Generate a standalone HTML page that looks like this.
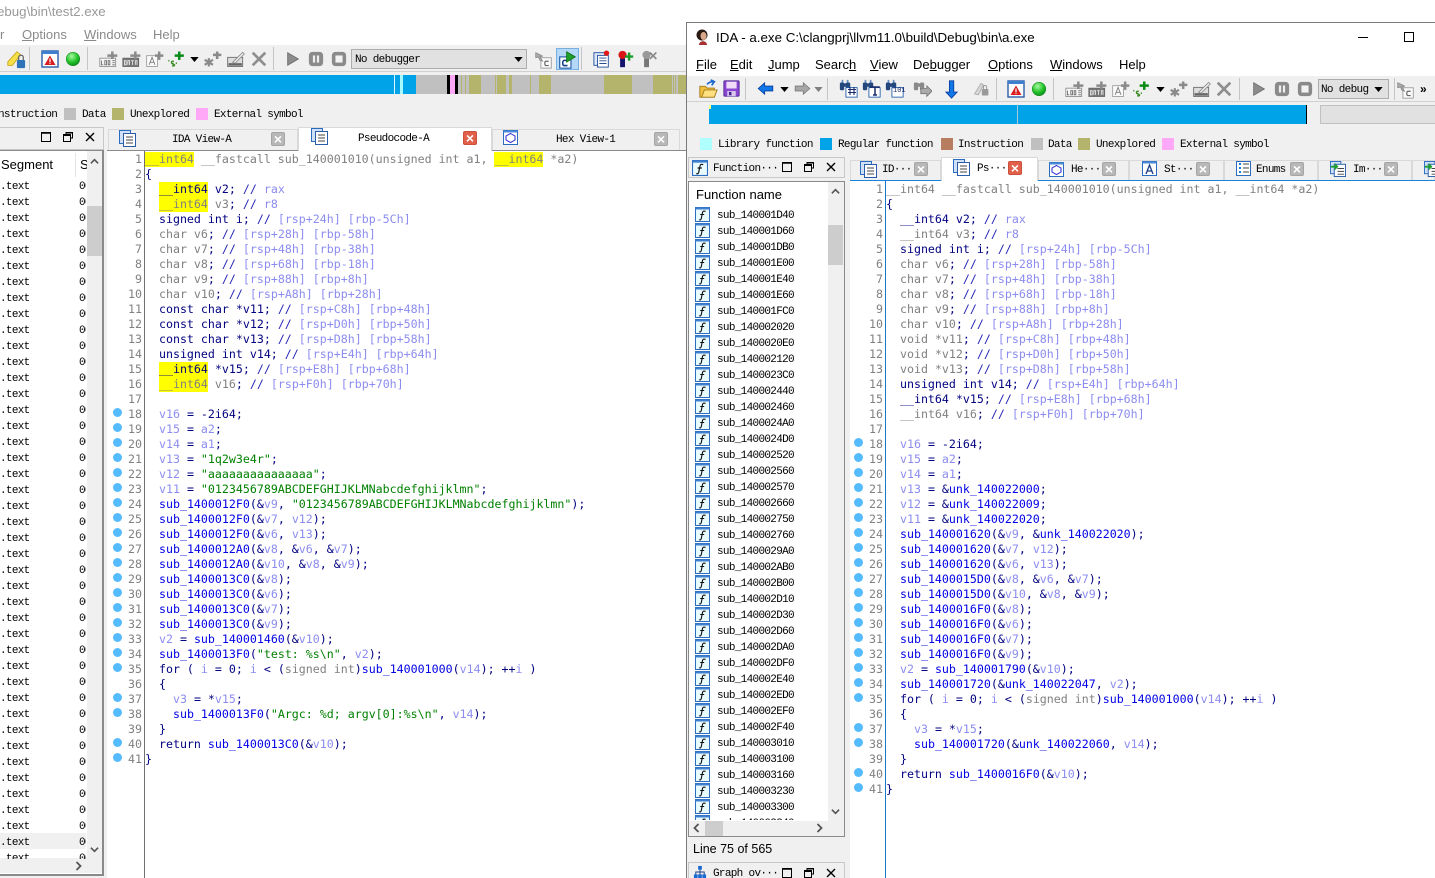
<!DOCTYPE html>
<html><head><meta charset="utf-8"><title>IDA</title>
<style>
html,body{margin:0;padding:0;background:#fff}
#p{position:relative;width:1435px;height:878px;overflow:hidden;background:#fff;font-family:"Liberation Sans",sans-serif}
#p div,#p pre,#p svg{position:absolute;margin:0}
.t{white-space:pre;font-size:12.6px;line-height:16px;color:#000}
.m{font-family:"Liberation Mono",monospace;font-size:11px;letter-spacing:-.68px;line-height:14px;white-space:pre;color:#000}
#p .m{margin-top:1px}
pre.c{font-family:"DejaVu Sans Mono",monospace;font-size:11.62px;line-height:15px;color:#000080}
pre.n{font-family:"DejaVu Sans Mono",monospace;font-size:11.62px;line-height:15px;color:#808080;text-align:right;width:30px}
pre.l{font-family:"Liberation Mono",monospace;font-size:11px;letter-spacing:-.68px;line-height:16px;color:#000;overflow:hidden}
#p pre.l{margin-top:1px}
pre a{color:#808080}
pre b{color:#8c8cf0;font-weight:normal}
pre i{color:#2626b8;font-style:normal}
pre em{color:#0000e6;font-style:normal}
pre s{color:#008000;text-decoration:none}
pre u{background:#ff0;text-decoration:none;display:inline-block;height:15px}
.u{text-decoration:underline}
.bx{width:12px;height:12px}
.tab{background:#f0f0f0;border:1px solid #d9d9d9;border-bottom:0;box-sizing:border-box}
.act{background:#fff;border:1px solid #d9d9d9;border-bottom:0;box-sizing:border-box}
.sep{width:1px;background:#c4c4c4}
.cl{width:14px;height:14px;border-radius:2px;background:#b8b8b8;border:1px solid #a5a5a5;box-sizing:border-box;color:#fff;font:bold 14px/12px "Liberation Sans",sans-serif;text-align:center}
.cl.r{background:#e2604a;border-color:#c9503c}
.d{width:9px;height:9px;border-radius:50%;background:#55bbff}
.s{height:19px;background:#b4b46c;top:75px}
</style></head><body><div id="p">
<svg width="0" height="0" style="left:0;top:0">
<defs>
<symbol id="redA" viewBox="0 0 18 18"><rect x="1" y="1" width="16" height="16" fill="#fff" stroke="#2a5ca8" stroke-width="1.4"/><rect x="1" y="1" width="16" height="3" fill="#3f7fd0"/><path d="M9 5.5L14.5 15H3.5Z" fill="#d81e1e"/><rect x="8.4" y="8.5" width="1.2" height="3.5" fill="#fff"/><rect x="8.4" y="12.6" width="1.2" height="1.2" fill="#fff"/></symbol>
<symbol id="green" viewBox="0 0 20 20"><defs><radialGradient id="gg" cx=".4" cy=".3" r=".8"><stop offset="0" stop-color="#a8f8a0"/><stop offset=".55" stop-color="#22c42a"/><stop offset="1" stop-color="#0d7a18"/></radialGradient></defs><circle cx="10" cy="10" r="7.5" fill="url(#gg)" stroke="#148a1c" stroke-width=".6"/></symbol>
<symbol id="code" viewBox="0 0 24 20"><rect x="1" y="9" width="19" height="10" fill="#f4f4f4" stroke="#8a8a8a"/><path d="M10 6h12M16 1v9" stroke="#8a8a8a" stroke-width="3"/><path d="M3 12v5h2M7 12h2v5H7zM11 12v5h2v-5zM16 12h3M16 14.500h3M16 17h3" stroke="#666" fill="none" stroke-width="1"/></symbol>
<symbol id="data" viewBox="0 0 24 20"><rect x="1" y="9" width="19" height="10" fill="#777" stroke="#666"/><path d="M10 6h12M16 1v9" stroke="#8a8a8a" stroke-width="3"/><path d="M3 12v5h2v-5zM7 17v-5h2v5M11 12h3M12.500 12v5M16 17v-5h2v5" stroke="#eee" fill="none"/></symbol>
<symbol id="aa" viewBox="0 0 24 20"><rect x="2" y="6" width="13" height="13" fill="#fafafa" stroke="#999"/><path d="M5 17l3.500-9 3.500 9M6.500 14h4" stroke="#777" fill="none"/><path d="M12 6h10M17 1v10" stroke="#8a8a8a" stroke-width="3"/></symbol>
<symbol id="ss" viewBox="0 0 24 20"><path d="M8 6h11M13.500 1v10" stroke="#0a8a16" stroke-width="3"/><path d="M7 13c-3-1-4 2-1 3s2 3-1 2" stroke="#3a8a22" stroke-width="1.800" fill="none"/><path d="M1 11v2M10 14v2" stroke="#3a8a22" stroke-width="1.300"/></symbol>
<symbol id="star" viewBox="0 0 24 20"><path d="M7 9v10M2 11l10 6M12 11L2 17" stroke="#8a8a8a" stroke-width="2.600"/><path d="M12 5h10M17 1v9" stroke="#8a8a8a" stroke-width="3"/></symbol>
<symbol id="edit" viewBox="0 0 24 20"><rect x="2" y="8" width="18" height="11" fill="#ddd" stroke="#666"/><rect x="3" y="15" width="16" height="3" fill="#666"/><path d="M8 14L20 2l2 2L11 15z" fill="#eee" stroke="#888"/></symbol>
<symbol id="xx" viewBox="0 0 20 20"><path d="M3 3l14 14M17 3L3 17" stroke="#8e8e8e" stroke-width="3"/></symbol>
<symbol id="play" viewBox="0 0 18 18"><path d="M3 2L15 9 3 16Z" fill="#8c8c8c" stroke="#6e6e6e"/></symbol>
<symbol id="pause" viewBox="0 0 18 18"><rect x="1" y="1" width="16" height="16" rx="4" fill="#8a8a8a"/><rect x="5.500" y="5" width="2.500" height="8" fill="#eee"/><rect x="10" y="5" width="2.500" height="8" fill="#eee"/></symbol>
<symbol id="stop" viewBox="0 0 18 18"><rect x="1" y="1" width="16" height="16" rx="4" fill="#8a8a8a"/><rect x="5" y="5" width="8" height="8" fill="#f2f2f2"/></symbol>
<symbol id="cc" viewBox="0 0 22 22"><rect x="8" y="9" width="12" height="12" fill="#fafafa" stroke="#999"/><path d="M17 13h-3c-2 0-2 5 0 5h3" stroke="#666" fill="none" stroke-width="1.400"/><path d="M2 3l8 4-3 1 3 5-3-1-2-4-3 1z" fill="#aaa" stroke="#777" stroke-width=".7"/></symbol>
<symbol id="cg" viewBox="0 0 22 22"><rect x="2" y="8" width="13" height="13" fill="#fff" stroke="#1f5aa8" stroke-width="1.300"/><path d="M11 12H7c-2 0-2 6 0 6h4" stroke="#123c88" fill="none" stroke-width="1.800"/><path d="M10 2l10 6-10 6z" fill="#1ea02a" stroke="#0f7018"/></symbol>
<symbol id="docp" viewBox="0 0 20 20"><rect x="1" y="3" width="12" height="14" fill="#dfe8f8" stroke="#1f4e9c"/><rect x="5" y="6" width="12" height="13" fill="#fff" stroke="#1f4e9c"/><path d="M7 9h8M7 12h8M7 15h8" stroke="#274a8a"/><circle cx="15" cy="3.500" r="3" fill="#e01818"/></symbol>
<symbol id="bp" viewBox="0 0 22 22"><rect x="5" y="10" width="6" height="11" fill="#14146e"/><circle cx="8" cy="6" r="5" fill="#d81616"/><path d="M11 8h10M16 3v10" stroke="#1c9a28" stroke-width="3"/></symbol>
<symbol id="bg" viewBox="0 0 22 22"><rect x="5" y="10" width="6" height="11" fill="#777"/><circle cx="8" cy="6" r="5" fill="#999"/><path d="M12 3l8 8M20 3l-8 8" stroke="#888" stroke-width="2"/></symbol>
<symbol id="lock" viewBox="0 0 22 22"><path d="M2 13L12 2l4 3L7 17H2z" fill="#f5e04a" stroke="#c8a818"/><rect x="12" y="11" width="9" height="9" rx="1" fill="#2e72b8"/><path d="M14 11V8c0-3 5-3 5 0v3" stroke="#666" fill="none" stroke-width="1.400"/></symbol>
<symbol id="lockg" viewBox="0 0 22 22"><path d="M3 17L11 4l3 2-6 12z" fill="#d6d6d6" stroke="#aaa"/><rect x="12" y="11" width="8" height="8" rx="1" fill="#9a9a9a"/><path d="M14 11V9c0-3 4-3 4 0v2" stroke="#888" fill="none"/></symbol>
<symbol id="open" viewBox="0 0 22 22"><path d="M2 8h6l2 2h8v10H2z" fill="#f0c040" stroke="#a07818"/><path d="M4 20l3-8h14l-3 8z" fill="#ffe080" stroke="#a07818"/><path d="M10 6c2-3 5-3 7-3M14 1l4 2-3 4" stroke="#1a66cc" fill="none" stroke-width="1.800"/></symbol>
<symbol id="save" viewBox="0 0 20 20"><rect x="1" y="1" width="18" height="18" rx="1" fill="#8a46d0" stroke="#4a1f90"/><rect x="4" y="2" width="12" height="8" fill="#f0dcf8"/><rect x="5" y="13" width="10" height="6" fill="#d8c8ee"/><rect x="7" y="14" width="3" height="4" fill="#4a1f90"/></symbol>
<symbol id="la" viewBox="0 0 20 16"><path d="M1 8l8-7v4h10v6H9v4z" fill="#1278e8" stroke="#0a3c9c"/></symbol>
<symbol id="ra" viewBox="0 0 20 16"><path d="M19 8l-8-7v4H1v6h10v4z" fill="#a8a8a8" stroke="#777"/></symbol>
<symbol id="dn" viewBox="0 0 10 6"><path d="M0 0h10L5 6z" fill="#000"/></symbol>
<symbol id="dng" viewBox="0 0 10 6"><path d="M0 0h10L5 6z" fill="#808080"/></symbol>
<symbol id="bino" viewBox="0 0 22 22"><rect x="1" y="4" width="5" height="9" rx="1.500" fill="#24487e"/><rect x="8" y="4" width="5" height="9" rx="1.500" fill="#24487e"/><rect x="5" y="5" width="4" height="4" fill="#24487e"/><rect x="3" y="1" width="2" height="3" fill="#6a8ec0"/><rect x="9" y="1" width="2" height="3" fill="#6a8ec0"/><rect x="8" y="10" width="13" height="11" fill="#fff" stroke="#1f5aa8"/></symbol>
<symbol id="binog" viewBox="0 0 22 22"><rect x="1" y="4" width="5" height="9" rx="1.500" fill="#8a8a8a"/><rect x="8" y="4" width="5" height="9" rx="1.500" fill="#8a8a8a"/><rect x="5" y="5" width="4" height="4" fill="#8a8a8a"/><path d="M9 11h7V8l6 6-6 6v-3H9z" fill="#aaa" stroke="#777"/></symbol>
<symbol id="down" viewBox="0 0 16 22"><path d="M5 1h5v13h4l-6.500 7L1 14h4z" fill="#1278e8" stroke="#0a3c9c"/></symbol>
<symbol id="doc" viewBox="0 0 17 17"><rect x=".5" y=".5" width="11" height="13" fill="#cfe0f8" stroke="#2a6cc0"/><rect x="4.500" y="3.500" width="12" height="13" fill="#fff" stroke="#2a5ca8"/><path d="M7 7h7M7 10h7M7 13h7" stroke="#444"/></symbol>
<symbol id="hex" viewBox="0 0 15 15"><rect x=".5" y=".5" width="14" height="14" fill="#fff" stroke="#2a6cc0"/><rect x=".5" y=".5" width="14" height="2" fill="#4a8ad8"/><path d="M7.500 3.500l4.500 2.500v4l-4.500 2.500L3 10V6z" fill="#fff" stroke="#2222d0"/></symbol>
<symbol id="st" viewBox="0 0 15 15"><rect x=".5" y=".5" width="14" height="14" fill="#fff" stroke="#2a6cc0"/><rect x=".5" y=".5" width="14" height="2" fill="#4a8ad8"/><path d="M4 13L7.500 4 11 13M5.500 10h4" stroke="#1a3c88" fill="none" stroke-width="1.300"/></symbol>
<symbol id="en" viewBox="0 0 15 15"><rect x=".5" y=".5" width="14" height="14" fill="#fff" stroke="#2a6cc0"/><path d="M3 3h2M3 7h2M3 11h2" stroke="#1a7ae0" stroke-width="2"/><path d="M7 3h6M7 7h6M7 11h6" stroke="#444"/></symbol>
<symbol id="im" viewBox="0 0 17 17"><rect x=".5" y=".5" width="11" height="13" fill="#cfe0f8" stroke="#2a6cc0"/><rect x="4.500" y="3.500" width="12" height="13" fill="#fff" stroke="#2a5ca8"/><path d="M8 8h7M8 11h7M8 14h7" stroke="#444"/><path d="M1 5h4V2l4 4-4 4V7H1z" fill="#20a030"/></symbol>
<symbol id="fn" viewBox="0 0 15 15"><rect x=".5" y=".5" width="14" height="14" fill="#e8fbff" stroke="#2a6cc0"/><rect x=".5" y=".5" width="14" height="2" fill="#3f7fd0"/><path d="M10.500 4.500c-2-1.200-3 0-3.200 2l-1 5c-.3 1.500-1.300 1.800-2.300 1.200M5.200 7.500h4" stroke="#111" fill="none" stroke-width="1.100"/></symbol>
<symbol id="gr" viewBox="0 0 15 15"><rect x="5.500" y="1" width="4" height="4" fill="#1a6ad0"/><rect x="1" y="10" width="4" height="4" fill="#1a6ad0"/><rect x="5.500" y="10" width="4" height="4" fill="#1a6ad0"/><rect x="10" y="10" width="4" height="4" fill="#1a6ad0"/><path d="M7.500 5v5M3 10V7.500h9V10" stroke="#1a3c88" fill="none"/></symbol>
<symbol id="mx" viewBox="0 0 12 12"><rect x="1.500" y="1.500" width="9" height="9" fill="none" stroke="#000"/><path d="M1 2h10" stroke="#000" stroke-width="1.500"/></symbol>
<symbol id="rs" viewBox="0 0 12 12"><path d="M4 3V1.500h6.500V7H8.500" fill="none" stroke="#000"/><rect x="1.500" y="3.500" width="7" height="7" fill="none" stroke="#000"/><path d="M1.500 4.500h7M4 2h6.500" stroke="#000"/></symbol>
<symbol id="cx" viewBox="0 0 12 12"><path d="M2 2l8 8M10 2l-8 8" stroke="#000" stroke-width="1.400"/></symbol>
<symbol id="up" viewBox="0 0 10 7"><path d="M1 5.500L5 1.500l4 4" stroke="#555" fill="none" stroke-width="1.800"/></symbol>
<symbol id="dw" viewBox="0 0 10 7"><path d="M1 1.500l4 4 4-4" stroke="#555" fill="none" stroke-width="1.800"/></symbol>
<symbol id="lt" viewBox="0 0 7 10"><path d="M5.500 1L1.500 5l4 4" stroke="#555" fill="none" stroke-width="1.800"/></symbol>
<symbol id="rt" viewBox="0 0 7 10"><path d="M1.500 1l4 4-4 4" stroke="#555" fill="none" stroke-width="1.800"/></symbol>
<pattern id="fnp" x="0" y="0" width="16" height="16" patternUnits="userSpaceOnUse"><use href="#fn" width="15" height="15"/></pattern>
</defs></svg>

<!-- LEFT WINDOW -->
<div class="t" style="left:-3px;top:4px;color:#999;font-size:13.3px">ebug\bin\test2.exe</div>
<div class="t" style="left:0;top:27px;color:#8a8a8a;font-size:13px">r</div>
<div class="t" style="left:22px;top:27px;color:#8a8a8a;font-size:13px"><span class="u">O</span>ptions</div>
<div class="t" style="left:84px;top:27px;color:#8a8a8a;font-size:13px"><span class="u">W</span>indows</div>
<div class="t" style="left:153px;top:27px;color:#8a8a8a;font-size:13px">Help</div>
<div style="left:0;top:45px;width:687px;height:105px;background:#f0f0f0"></div>
<div style="left:0;top:71px;width:687px;height:1px;background:#d0d0d0"></div>
<div class="sep" style="left:29px;top:47px;height:23px"></div><div class="sep" style="left:87px;top:47px;height:23px"></div><div class="sep" style="left:273px;top:47px;height:23px"></div><div class="sep" style="left:581px;top:47px;height:23px"></div>
<svg style="left:6px;top:50px" width="20" height="20"><use href="#lock"/></svg>
<svg style="left:41px;top:50px" width="18" height="18"><use href="#redA"/></svg>
<svg style="left:64px;top:50px" width="18" height="18"><use href="#green"/></svg>
<svg style="left:99px;top:50px" width="20" height="18"><use href="#code"/></svg>
<svg style="left:122px;top:50px" width="20" height="18"><use href="#data"/></svg>
<svg style="left:145px;top:50px" width="20" height="18"><use href="#aa"/></svg>
<svg style="left:168px;top:50px" width="20" height="18"><use href="#ss"/></svg>
<svg style="left:190px;top:57px" width="9" height="5"><use href="#dn"/></svg>
<svg style="left:203px;top:50px" width="20" height="18"><use href="#star"/></svg>
<svg style="left:226px;top:50px" width="20" height="18"><use href="#edit"/></svg>
<svg style="left:250px;top:50px" width="18" height="18"><use href="#xx"/></svg>
<svg style="left:285px;top:51px" width="16" height="16"><use href="#play"/></svg>
<svg style="left:308px;top:51px" width="16" height="16"><use href="#pause"/></svg>
<svg style="left:331px;top:51px" width="16" height="16"><use href="#stop"/></svg>
<div style="left:351px;top:49px;width:176px;height:20px;background:#e1e1e1;border:1px solid #adadad;box-sizing:border-box"></div>
<div class="m" style="left:355px;top:52px">No debugger</div>
<svg style="left:514px;top:57px" width="9" height="5"><use href="#dn"/></svg>
<svg style="left:534px;top:50px" width="19" height="19"><use href="#cc"/></svg>
<div style="left:556px;top:48px;width:23px;height:22px;background:#b4d8f8;border:1px solid #78aee0;box-sizing:border-box"></div>
<svg style="left:558px;top:50px" width="19" height="19"><use href="#cg"/></svg>
<svg style="left:593px;top:50px" width="18" height="18"><use href="#docp"/></svg>
<svg style="left:616px;top:50px" width="18" height="18"><use href="#bp"/></svg>
<svg style="left:640px;top:50px" width="18" height="18"><use href="#bg"/></svg>

<div style="left:0;top:75px;width:687px;height:19px;background:#c0c0c0"></div>
<div class="s" style="left:0;width:416px;background:#00a2e8"></div>
<div class="s" style="left:394px;width:1px;background:#d8f4ff"></div>
<div class="s" style="left:400px;width:3px;background:#a8f8ff"></div>
<div class="s" style="left:447px;width:3px;background:#000"></div>
<div class="s" style="left:450px;width:5px;background:#ffa8f8"></div>
<div class="s" style="left:455px;width:3px;background:#000"></div>
<div class="s" style="left:461px;width:1px"></div><div class="s" style="left:465px;width:1px"></div>
<div class="s" style="left:469px;width:12px"></div>
<div class="s" style="left:495px;width:1px"></div><div class="s" style="left:497px;width:9px"></div>
<div class="s" style="left:509px;width:3px"></div><div class="s" style="left:530px;width:1px"></div>
<div class="s" style="left:539px;width:12px"></div><div class="s" style="left:604px;width:28px"></div>
<div class="s" style="left:653px;width:19px"></div><div class="s" style="left:673px;width:1px"></div>
<div class="s" style="left:675px;width:1px"></div><div class="s" style="left:678px;width:9px"></div>

<div class="m" style="left:-2px;top:107px">nstruction</div>
<div class="bx" style="left:64px;top:108px;background:#c0c0c0"></div><div class="m" style="left:82px;top:107px">Data</div>
<div class="bx" style="left:112px;top:108px;background:#b4b46c"></div><div class="m" style="left:130px;top:107px">Unexplored</div>
<div class="bx" style="left:196px;top:108px;background:#ffa8f8"></div><div class="m" style="left:214px;top:107px">External symbol</div>

<!-- left dock header -->
<div style="left:0;top:127px;width:104px;height:23px;border:1px solid #c8c8c8;border-left:0;box-sizing:border-box"></div>
<svg style="left:40px;top:131px" width="12" height="12"><use href="#mx"/></svg>
<svg style="left:62px;top:131px" width="12" height="12"><use href="#rs"/></svg>
<svg style="left:84px;top:131px" width="12" height="12"><use href="#cx"/></svg>

<!-- left tabs -->
<div class="tab" style="left:108px;top:129px;width:190px;height:21px"></div>
<div class="act" style="left:298px;top:127px;width:194px;height:24px;z-index:2"></div>
<div class="tab" style="left:492px;top:129px;width:188px;height:21px"></div>
<div style="left:105px;top:150px;width:582px;height:1px;background:#8a8a8a"></div>
<svg style="left:119px;top:130px;z-index:3" width="17" height="17"><use href="#doc"/></svg>
<svg style="left:311px;top:128px;z-index:3" width="17" height="17"><use href="#doc"/></svg>
<svg style="left:503px;top:130px;z-index:3" width="15" height="15"><use href="#hex"/></svg>
<div class="m" style="left:172px;top:132px">IDA View-A</div>
<div class="m" style="left:358px;top:131px;z-index:3">Pseudocode-A</div>
<div class="m" style="left:556px;top:132px">Hex View-1</div>
<div class="cl" style="left:271px;top:132px">×</div>
<div class="cl r" style="left:463px;top:131px;z-index:3">×</div>
<div class="cl" style="left:654px;top:132px">×</div>

<!-- segment panel -->
<div style="left:0;top:150px;width:104px;height:726px;background:#fff;border:2px solid #8a8a8a;border-left:0;border-top:1px solid #8a8a8a;box-sizing:border-box"></div>
<div style="left:104px;top:150px;width:3px;height:728px;background:#f0f0f0"></div>
<div style="left:0;top:876px;width:107px;height:2px;background:#f0f0f0"></div>
<div style="left:87px;top:151px;width:15px;height:707px;background:#f0f0f0"></div>
<div style="left:0;top:858px;width:102px;height:15px;background:#f0f0f0"></div>
<div style="left:87px;top:206px;width:15px;height:50px;background:#cdcdcd"></div>
<div style="left:75px;top:153px;width:1px;height:24px;background:#e5e5e5"></div>
<svg style="left:90px;top:158px" width="9" height="7"><use href="#up"/></svg>
<svg style="left:90px;top:846px" width="9" height="7"><use href="#dw"/></svg>
<svg style="left:75px;top:861px" width="7" height="10"><use href="#rt"/></svg>
<div class="t" style="left:1px;top:157px;font-size:13px">Segment</div>
<div class="t" style="left:80px;top:157px;font-size:13px;width:7px;overflow:hidden">S</div>
<div style="left:0;top:833px;width:86px;height:16px;background:#f0f0f0"></div>
<pre class="l" style="left:0;top:178px;width:40px;height:680px">.text
.text
.text
.text
.text
.text
.text
.text
.text
.text
.text
.text
.text
.text
.text
.text
.text
.text
.text
.text
.text
.text
.text
.text
.text
.text
.text
.text
.text
.text
.text
.text
.text
.text
.text
.text
.text
.text
.text
.text
.text
.text
.text</pre>
<pre class="l" style="left:79px;top:178px;width:7px;height:680px">00
00
00
00
00
00
00
00
00
00
00
00
00
00
00
00
00
00
00
00
00
00
00
00
00
00
00
00
00
00
00
00
00
00
00
00
00
00
00
00
00
00
00</pre>

<!-- left code -->
<div style="left:144px;top:151px;width:1px;height:727px;background:#707070"></div>
<pre class="n" style="left:112px;top:152px">1
2
3
4
5
6
7
8
9
10
11
12
13
14
15
16
17
18
19
20
21
22
23
24
25
26
27
28
29
30
31
32
33
34
35
36
37
38
39
40
41</pre>
<pre class="c" style="left:145px;top:152px"><a><u>__int64</u> __fastcall sub_140001010(unsigned int a1, <u>__int64</u> *a2)</a>
{
  <u>__int64</u> v2; <i>//</i> <b>rax</b>
  <u><a>__int64</a></u> <a>v3</a>; <i>//</i> <b>r8</b>
  signed int i; <i>//</i> <b>[rsp+24h] [rbp-5Ch]</b>
  <a>char v6</a>; <i>//</i> <b>[rsp+28h] [rbp-58h]</b>
  <a>char v7</a>; <i>//</i> <b>[rsp+48h] [rbp-38h]</b>
  <a>char v8</a>; <i>//</i> <b>[rsp+68h] [rbp-18h]</b>
  <a>char v9</a>; <i>//</i> <b>[rsp+88h] [rbp+8h]</b>
  <a>char v10</a>; <i>//</i> <b>[rsp+A8h] [rbp+28h]</b>
  const char *v11; <i>//</i> <b>[rsp+C8h] [rbp+48h]</b>
  const char *v12; <i>//</i> <b>[rsp+D0h] [rbp+50h]</b>
  const char *v13; <i>//</i> <b>[rsp+D8h] [rbp+58h]</b>
  unsigned int v14; <i>//</i> <b>[rsp+E4h] [rbp+64h]</b>
  <u>__int64</u> *v15; <i>//</i> <b>[rsp+E8h] [rbp+68h]</b>
  <u><a>__int64</a></u> <a>v16</a>; <i>//</i> <b>[rsp+F0h] [rbp+70h]</b>

  <b>v16</b> = -2i64;
  <b>v15</b> = <b>a2</b>;
  <b>v14</b> = <b>a1</b>;
  <b>v13</b> = <s>"1q2w3e4r"</s>;
  <b>v12</b> = <s>"aaaaaaaaaaaaaaa"</s>;
  <b>v11</b> = <s>"0123456789ABCDEFGHIJKLMNabcdefghijklmn"</s>;
  <em>sub_1400012F0</em>(&amp;<b>v9</b>, <s>"0123456789ABCDEFGHIJKLMNabcdefghijklmn"</s>);
  <em>sub_1400012F0</em>(&amp;<b>v7</b>, <b>v12</b>);
  <em>sub_1400012F0</em>(&amp;<b>v6</b>, <b>v13</b>);
  <em>sub_1400012A0</em>(&amp;<b>v8</b>, &amp;<b>v6</b>, &amp;<b>v7</b>);
  <em>sub_1400012A0</em>(&amp;<b>v10</b>, &amp;<b>v8</b>, &amp;<b>v9</b>);
  <em>sub_1400013C0</em>(&amp;<b>v8</b>);
  <em>sub_1400013C0</em>(&amp;<b>v6</b>);
  <em>sub_1400013C0</em>(&amp;<b>v7</b>);
  <em>sub_1400013C0</em>(&amp;<b>v9</b>);
  <b>v2</b> = <em>sub_140001460</em>(&amp;<b>v10</b>);
  <em>sub_1400013F0</em>(<s>"test: %s\n"</s>, <b>v2</b>);
  for ( <b>i</b> = 0; <b>i</b> &lt; (<a>signed int</a>)<em>sub_140001000</em>(<b>v14</b>); ++<b>i</b> )
  {
    <b>v3</b> = *<b>v15</b>;
    <em>sub_1400013F0</em>(<s>"Argc: %d; argv[0]:%s\n"</s>, <b>v14</b>);
  }
  return <em>sub_1400013C0</em>(&amp;<b>v10</b>);
}</pre>
<div class="d" style="left:113px;top:408px"></div><div class="d" style="left:113px;top:423px"></div><div class="d" style="left:113px;top:438px"></div><div class="d" style="left:113px;top:453px"></div><div class="d" style="left:113px;top:468px"></div><div class="d" style="left:113px;top:483px"></div><div class="d" style="left:113px;top:498px"></div><div class="d" style="left:113px;top:513px"></div><div class="d" style="left:113px;top:528px"></div><div class="d" style="left:113px;top:543px"></div><div class="d" style="left:113px;top:558px"></div><div class="d" style="left:113px;top:573px"></div><div class="d" style="left:113px;top:588px"></div><div class="d" style="left:113px;top:603px"></div><div class="d" style="left:113px;top:618px"></div><div class="d" style="left:113px;top:633px"></div><div class="d" style="left:113px;top:648px"></div><div class="d" style="left:113px;top:663px"></div><div class="d" style="left:113px;top:693px"></div><div class="d" style="left:113px;top:708px"></div><div class="d" style="left:113px;top:738px"></div><div class="d" style="left:113px;top:753px"></div>

<!-- RIGHT WINDOW -->
<div style="left:686px;top:22px;width:749px;height:856px;background:#f0f0f0;border-left:1px solid #7a7a7a;border-top:1px solid #7a7a7a;box-sizing:border-box"></div>
<div style="left:687px;top:23px;width:748px;height:53px;background:#fff"></div>
<svg style="left:695px;top:29px" width="16" height="17" viewBox="0 0 16 17"><ellipse cx="7" cy="6" rx="5.500" ry="5.500" fill="#2a1a14"/><ellipse cx="8.500" cy="7" rx="3" ry="4" fill="#d8a888"/><path d="M4 16c0-5 8-5 8 0z" fill="#a83030"/></svg>
<div class="t" style="left:716px;top:30px;font-size:13.35px">IDA - a.exe C:\clangprj\llvm11.0\build\Debug\bin\a.exe</div>
<div style="left:1358px;top:37px;width:10px;height:1px;background:#000"></div>
<div style="left:1404px;top:32px;width:10px;height:10px;border:1px solid #000;box-sizing:border-box"></div>
<div class="t" style="left:696px;top:57px;font-size:13px"><span class="u">F</span>ile</div>
<div class="t" style="left:730px;top:57px;font-size:13px"><span class="u">E</span>dit</div>
<div class="t" style="left:768px;top:57px;font-size:13px"><span class="u">J</span>ump</div>
<div class="t" style="left:815px;top:57px;font-size:13px">Searc<span class="u">h</span></div>
<div class="t" style="left:870px;top:57px;font-size:13px"><span class="u">V</span>iew</div>
<div class="t" style="left:913px;top:57px;font-size:13px">De<span class="u">b</span>ugger</div>
<div class="t" style="left:988px;top:57px;font-size:13px"><span class="u">O</span>ptions</div>
<div class="t" style="left:1050px;top:57px;font-size:13px"><span class="u">W</span>indows</div>
<div class="t" style="left:1119px;top:57px;font-size:13px">Help</div>
<div style="left:687px;top:101px;width:748px;height:1px;background:#d0d0d0"></div>
<div class="sep" style="left:745px;top:78px;height:22px"></div><div class="sep" style="left:827px;top:78px;height:22px"></div><div class="sep" style="left:996px;top:78px;height:22px"></div><div class="sep" style="left:1053px;top:78px;height:22px"></div><div class="sep" style="left:1239px;top:78px;height:22px"></div><div class="sep" style="left:1394px;top:78px;height:22px"></div>
<svg style="left:698px;top:79px" width="20" height="20"><use href="#open"/></svg>
<svg style="left:723px;top:80px" width="17" height="17"><use href="#save"/></svg>
<svg style="left:757px;top:82px" width="17" height="13"><use href="#la"/></svg>
<svg style="left:780px;top:87px" width="9" height="5"><use href="#dn"/></svg>
<svg style="left:794px;top:82px" width="17" height="13"><use href="#ra"/></svg>
<svg style="left:814px;top:87px" width="9" height="5"><use href="#dng"/></svg>
<svg style="left:839px;top:79px" width="19" height="19"><use href="#bino"/></svg>
<svg style="left:862px;top:79px" width="19" height="19"><use href="#bino"/></svg>
<svg style="left:885px;top:79px" width="19" height="19"><use href="#bino"/></svg>
<svg style="left:847px;top:86px" width="10" height="10" viewBox="0 0 10 10"><path d="M3 1v8M7 1v8M1 3.500h8M1 6.500h8" stroke="#1a2a6a" stroke-width="1.100"/></svg>
<svg style="left:870px;top:86px" width="10" height="10" viewBox="0 0 10 10"><path d="M1 2V1h8v1M5 1v8M3 9h4" stroke="#1a2a6a" stroke-width="1.500" fill="none"/></svg>
<div style="left:893px;top:87px;width:10px;height:9px;font:7px/9px 'Liberation Mono',monospace;color:#1a2a6a">101</div>
<svg style="left:913px;top:79px" width="19" height="19"><use href="#binog"/></svg>
<svg style="left:945px;top:80px" width="14" height="19"><use href="#down"/></svg>
<svg style="left:972px;top:80px" width="18" height="18"><use href="#lockg"/></svg>
<svg style="left:1007px;top:80px" width="18" height="18"><use href="#redA"/></svg>
<svg style="left:1030px;top:80px" width="18" height="18"><use href="#green"/></svg>
<svg style="left:1065px;top:80px" width="20" height="18"><use href="#code"/></svg>
<svg style="left:1088px;top:80px" width="20" height="18"><use href="#data"/></svg>
<svg style="left:1111px;top:80px" width="20" height="18"><use href="#aa"/></svg>
<svg style="left:1133px;top:80px" width="20" height="18"><use href="#ss"/></svg>
<svg style="left:1156px;top:87px" width="9" height="5"><use href="#dn"/></svg>
<svg style="left:1169px;top:80px" width="20" height="18"><use href="#star"/></svg>
<svg style="left:1192px;top:80px" width="20" height="18"><use href="#edit"/></svg>
<svg style="left:1215px;top:80px" width="18" height="18"><use href="#xx"/></svg>
<svg style="left:1251px;top:81px" width="16" height="16"><use href="#play"/></svg>
<svg style="left:1274px;top:81px" width="16" height="16"><use href="#pause"/></svg>
<svg style="left:1297px;top:81px" width="16" height="16"><use href="#stop"/></svg>
<div style="left:1318px;top:79px;width:71px;height:20px;background:#e1e1e1;border:1px solid #adadad;box-sizing:border-box"></div>
<div class="m" style="left:1321px;top:82px">No debug</div>
<svg style="left:1374px;top:87px" width="9" height="5"><use href="#dn"/></svg>
<svg style="left:1396px;top:80px" width="19" height="19"><use href="#cc"/></svg>
<div class="t" style="left:1420px;top:81px;font-size:12px;font-weight:bold">»</div>

<div style="left:709px;top:105px;width:597px;height:19px;background:#00a2e8;border-right:1px solid #000"></div>
<div style="left:1017px;top:105px;width:1px;height:19px;background:#a8c8d8"></div>
<div style="left:709px;top:105px;width:2px;height:4px;background:#ffff80"></div>
<div style="left:1320px;top:105px;width:115px;height:19px;background:#e1e1e1;border:1px solid #c0c0c0;border-right:0;box-sizing:border-box"></div>

<div class="bx" style="left:700px;top:138px;background:#b0ffff"></div><div class="m" style="left:718px;top:137px">Library function</div>
<div class="bx" style="left:820px;top:138px;background:#00a2e8"></div><div class="m" style="left:838px;top:137px">Regular function</div>
<div class="bx" style="left:941px;top:138px;background:#b87d5e"></div><div class="m" style="left:958px;top:137px">Instruction</div>
<div class="bx" style="left:1031px;top:138px;background:#c0c0c0"></div><div class="m" style="left:1048px;top:137px">Data</div>
<div class="bx" style="left:1078px;top:138px;background:#b4b46c"></div><div class="m" style="left:1096px;top:137px">Unexplored</div>
<div class="bx" style="left:1162px;top:138px;background:#ffa8f8"></div><div class="m" style="left:1180px;top:137px">External symbol</div>

<!-- functions panel -->
<div style="left:688px;top:157px;width:157px;height:21px;border:1px solid #c8c8c8;box-sizing:border-box"></div>
<svg style="left:692px;top:160px" width="16" height="16"><use href="#fn"/></svg>
<div class="m" style="left:713px;top:161px">Function···</div>
<svg style="left:781px;top:161px" width="12" height="12"><use href="#mx"/></svg>
<svg style="left:803px;top:161px" width="12" height="12"><use href="#rs"/></svg>
<svg style="left:825px;top:161px" width="12" height="12"><use href="#cx"/></svg>
<div style="left:688px;top:181px;width:157px;height:656px;background:#fff;border:1px solid #8a8a8a;box-sizing:border-box"></div>
<div style="left:828px;top:182px;width:16px;height:654px;background:#f0f0f0"></div>
<div style="left:689px;top:821px;width:155px;height:15px;background:#f0f0f0"></div>
<div style="left:828px;top:225px;width:15px;height:40px;background:#cdcdcd"></div>
<div style="left:705px;top:821px;width:18px;height:15px;background:#cdcdcd"></div>
<svg style="left:831px;top:188px" width="9" height="7"><use href="#up"/></svg>
<svg style="left:831px;top:808px" width="9" height="7"><use href="#dw"/></svg>
<svg style="left:693px;top:823px" width="7" height="10"><use href="#lt"/></svg>
<svg style="left:816px;top:823px" width="7" height="10"><use href="#rt"/></svg>
<div class="t" style="left:696px;top:187px;font-size:13px">Function name</div>
<svg style="left:695px;top:207px" width="16" height="613"><rect width="16" height="613" fill="url(#fnp)"/></svg>
<pre class="l" style="left:717px;top:207px;width:110px;height:612px">sub_140001D40
sub_140001D60
sub_140001DB0
sub_140001E00
sub_140001E40
sub_140001E60
sub_140001FC0
sub_140002020
sub_1400020E0
sub_140002120
sub_1400023C0
sub_140002440
sub_140002460
sub_1400024A0
sub_1400024D0
sub_140002520
sub_140002560
sub_140002570
sub_140002660
sub_140002750
sub_140002760
sub_1400029A0
sub_140002AB0
sub_140002B00
sub_140002D10
sub_140002D30
sub_140002D60
sub_140002DA0
sub_140002DF0
sub_140002E40
sub_140002ED0
sub_140002EF0
sub_140002F40
sub_140003010
sub_140003100
sub_140003160
sub_140003230
sub_140003300
sub_140003340</pre>
<div class="t" style="left:693px;top:841px;font-size:12.5px">Line 75 of 565</div>
<div style="left:688px;top:862px;width:157px;height:16px;border:1px solid #c8c8c8;border-bottom:0;box-sizing:border-box"></div>
<svg style="left:693px;top:865px" width="14" height="14"><use href="#gr"/></svg>
<div class="m" style="left:713px;top:866px">Graph ov···</div>
<svg style="left:781px;top:867px" width="12" height="12"><use href="#mx"/></svg>
<svg style="left:803px;top:867px" width="12" height="12"><use href="#rs"/></svg>
<svg style="left:825px;top:867px" width="12" height="12"><use href="#cx"/></svg>

<!-- right tabs -->
<div class="tab" style="left:850px;top:160px;width:91px;height:20px"></div>
<div class="act" style="left:941px;top:157px;width:97px;height:24px;z-index:2"></div>
<div class="tab" style="left:1038px;top:160px;width:91px;height:20px"></div>
<div class="tab" style="left:1129px;top:160px;width:95px;height:20px"></div>
<div class="tab" style="left:1224px;top:160px;width:94px;height:20px"></div>
<div class="tab" style="left:1318px;top:160px;width:94px;height:20px"></div>
<div class="tab" style="left:1412px;top:160px;width:23px;height:20px"></div>
<svg style="left:860px;top:161px" width="17" height="17"><use href="#doc"/></svg>
<svg style="left:953px;top:159px;z-index:3" width="17" height="17"><use href="#doc"/></svg>
<svg style="left:1049px;top:162px" width="15" height="15"><use href="#hex"/></svg>
<svg style="left:1142px;top:161px" width="15" height="15"><use href="#st"/></svg>
<svg style="left:1236px;top:161px" width="15" height="15"><use href="#en"/></svg>
<svg style="left:1330px;top:161px" width="16" height="16"><use href="#im"/></svg>
<svg style="left:1424px;top:161px" width="16" height="16"><use href="#im"/></svg>
<div class="m" style="left:882px;top:162px">ID···</div>
<div class="m" style="left:977px;top:161px;z-index:3">Ps···</div>
<div class="m" style="left:1071px;top:162px">He···</div>
<div class="m" style="left:1164px;top:162px">St···</div>
<div class="m" style="left:1256px;top:162px">Enums</div>
<div class="m" style="left:1353px;top:162px">Im···</div>
<div class="cl" style="left:914px;top:162px">×</div>
<div class="cl r" style="left:1008px;top:161px;z-index:3">×</div>
<div class="cl" style="left:1102px;top:162px">×</div>
<div class="cl" style="left:1196px;top:162px">×</div>
<div class="cl" style="left:1290px;top:162px">×</div>
<div class="cl" style="left:1384px;top:162px">×</div>

<!-- right code -->
<div style="left:850px;top:180px;width:585px;height:698px;background:#fff"></div>
<div style="left:850px;top:180px;width:585px;height:1px;background:#1a84d8"></div>
<div style="left:885px;top:180px;width:1px;height:698px;background:#1a78c8"></div>
<pre class="n" style="left:853px;top:182px">1
2
3
4
5
6
7
8
9
10
11
12
13
14
15
16
17
18
19
20
21
22
23
24
25
26
27
28
29
30
31
32
33
34
35
36
37
38
39
40
41</pre>
<pre class="c" style="left:886px;top:182px"><a>__int64 __fastcall sub_140001010(unsigned int a1, __int64 *a2)</a>
{
  __int64 v2; <i>//</i> <b>rax</b>
  <a>__int64 v3</a>; <i>//</i> <b>r8</b>
  signed int i; <i>//</i> <b>[rsp+24h] [rbp-5Ch]</b>
  <a>char v6</a>; <i>//</i> <b>[rsp+28h] [rbp-58h]</b>
  <a>char v7</a>; <i>//</i> <b>[rsp+48h] [rbp-38h]</b>
  <a>char v8</a>; <i>//</i> <b>[rsp+68h] [rbp-18h]</b>
  <a>char v9</a>; <i>//</i> <b>[rsp+88h] [rbp+8h]</b>
  <a>char v10</a>; <i>//</i> <b>[rsp+A8h] [rbp+28h]</b>
  <a>void *v11</a>; <i>//</i> <b>[rsp+C8h] [rbp+48h]</b>
  <a>void *v12</a>; <i>//</i> <b>[rsp+D0h] [rbp+50h]</b>
  <a>void *v13</a>; <i>//</i> <b>[rsp+D8h] [rbp+58h]</b>
  unsigned int v14; <i>//</i> <b>[rsp+E4h] [rbp+64h]</b>
  __int64 *v15; <i>//</i> <b>[rsp+E8h] [rbp+68h]</b>
  <a>__int64 v16</a>; <i>//</i> <b>[rsp+F0h] [rbp+70h]</b>

  <b>v16</b> = -2i64;
  <b>v15</b> = <b>a2</b>;
  <b>v14</b> = <b>a1</b>;
  <b>v13</b> = &amp;<em>unk_140022000</em>;
  <b>v12</b> = &amp;<em>unk_140022009</em>;
  <b>v11</b> = &amp;<em>unk_140022020</em>;
  <em>sub_140001620</em>(&amp;<b>v9</b>, &amp;<em>unk_140022020</em>);
  <em>sub_140001620</em>(&amp;<b>v7</b>, <b>v12</b>);
  <em>sub_140001620</em>(&amp;<b>v6</b>, <b>v13</b>);
  <em>sub_1400015D0</em>(&amp;<b>v8</b>, &amp;<b>v6</b>, &amp;<b>v7</b>);
  <em>sub_1400015D0</em>(&amp;<b>v10</b>, &amp;<b>v8</b>, &amp;<b>v9</b>);
  <em>sub_1400016F0</em>(&amp;<b>v8</b>);
  <em>sub_1400016F0</em>(&amp;<b>v6</b>);
  <em>sub_1400016F0</em>(&amp;<b>v7</b>);
  <em>sub_1400016F0</em>(&amp;<b>v9</b>);
  <b>v2</b> = <em>sub_140001790</em>(&amp;<b>v10</b>);
  <em>sub_140001720</em>(&amp;<em>unk_140022047</em>, <b>v2</b>);
  for ( <b>i</b> = 0; <b>i</b> &lt; (<a>signed int</a>)<em>sub_140001000</em>(<b>v14</b>); ++<b>i</b> )
  {
    <b>v3</b> = *<b>v15</b>;
    <em>sub_140001720</em>(&amp;<em>unk_140022060</em>, <b>v14</b>);
  }
  return <em>sub_1400016F0</em>(&amp;<b>v10</b>);
}</pre>
<div class="d" style="left:854px;top:438px"></div><div class="d" style="left:854px;top:453px"></div><div class="d" style="left:854px;top:468px"></div><div class="d" style="left:854px;top:483px"></div><div class="d" style="left:854px;top:498px"></div><div class="d" style="left:854px;top:513px"></div><div class="d" style="left:854px;top:528px"></div><div class="d" style="left:854px;top:543px"></div><div class="d" style="left:854px;top:558px"></div><div class="d" style="left:854px;top:573px"></div><div class="d" style="left:854px;top:588px"></div><div class="d" style="left:854px;top:603px"></div><div class="d" style="left:854px;top:618px"></div><div class="d" style="left:854px;top:633px"></div><div class="d" style="left:854px;top:648px"></div><div class="d" style="left:854px;top:663px"></div><div class="d" style="left:854px;top:678px"></div><div class="d" style="left:854px;top:693px"></div><div class="d" style="left:854px;top:723px"></div><div class="d" style="left:854px;top:738px"></div><div class="d" style="left:854px;top:768px"></div><div class="d" style="left:854px;top:783px"></div>
</div></body></html>
